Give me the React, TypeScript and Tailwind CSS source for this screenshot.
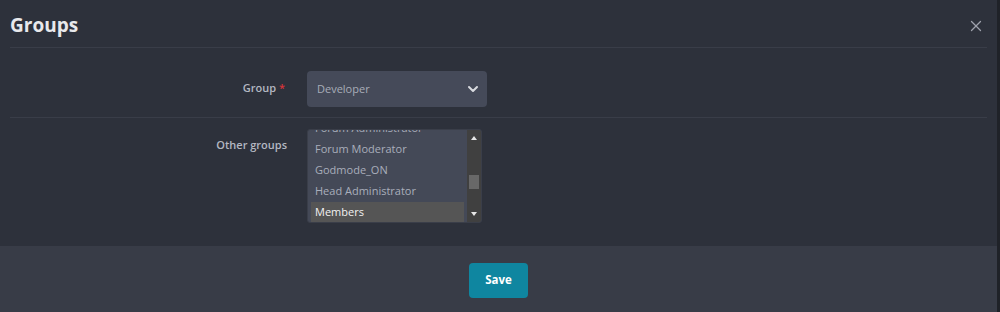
import React from "react";
import { X, ChevronDown } from "lucide-react";

const otherGroups = [
  "Forum Administrator",
  "Forum Moderator",
  "Godmode_ON",
  "Head Administrator",
  "Members",
];

export default function App() {
  return (
    <div
      className="flex h-[312px] w-[1000px] bg-[#2d313b]"
      style={{ fontFamily: '"Open Sans", "Noto Sans", sans-serif' }}
    >
      <div className="flex flex-1 flex-col">
        {/* Corps */}
        <div className="h-[246px] px-[10px]">
          <div className="flex h-[48px] items-center justify-between border-b border-[#393d48] pt-[4px]">
            <h2 className="text-[19px] font-bold text-[#e8e9eb]">Groups</h2>
            <button aria-label="Fermer" className="mr-[2px] text-[#9ea2ac]">
              <X className="h-[18px] w-[18px]" strokeWidth={1.7} />
            </button>
          </div>

          {/* Groupe principal */}
          <div className="flex h-[70px] items-start border-b border-[#393d48] pt-[23px]">
            <label className="w-[278px] pr-[3px] pt-[9px] text-right text-[11px] font-semibold text-[#b4b8c2]">
              Group <span className="text-[#d8343a]">*</span>
            </label>
            <div className="ml-[19px] flex h-[36px] w-[180px] items-center justify-between rounded-[4px] bg-[#454a59] pl-[10px] pr-[6px]">
              <span className="pt-[1px] text-[11px] text-[#a8adb8]">Developer</span>
              <ChevronDown className="h-[16px] w-[16px] text-[#d9dbe0]" strokeWidth={3} />
            </div>
          </div>

          {/* Autres groupes */}
          <div className="flex items-start pt-[11px]">
            <label className="w-[278px] pr-[1px] pt-[8px] text-right text-[11px] font-semibold text-[#b4b8c2]">
              Other groups
            </label>
            <div className="ml-[19px] flex h-[94px] w-[175px] overflow-hidden rounded-[3px] border border-[#3a3e49] bg-[#444957]">
              <div className="flex-1 overflow-hidden px-[3px] pt-[3px]">
                <div className="-mt-[15px] flex flex-col">
                  {otherGroups.map((g) => (
                    <div
                      key={g}
                      className={`flex h-[21px] items-center pl-[4px] text-[11px] ${
                        g === "Members" ? "bg-[#555555] text-[#f2f2f2]" : "text-[#a9aebb]"
                      }`}
                    >
                      {g}
                    </div>
                  ))}
                </div>
              </div>
              <div className="flex w-[14px] flex-col items-center bg-[#404040]">
                <div className="mt-[6px] h-0 w-0 border-x-[3px] border-b-[4px] border-x-transparent border-b-[#e6e6e6]" />
                <div className="mt-[35px] h-[14px] w-[10px] bg-[#686868]" />
                <div className="mt-auto mb-[6px] h-0 w-0 border-x-[3px] border-t-[4px] border-x-transparent border-t-[#e6e6e6]" />
              </div>
            </div>
          </div>
        </div>

        {/* Pied */}
        <div className="flex h-[66px] items-center justify-center bg-[#383c47] pt-[2px]">
          <button className="h-[35px] w-[59px] rounded-[4px] bg-[#0f86a0] text-[11.5px] font-bold text-white">
            Save
          </button>
        </div>
      </div>
      <div className="w-[3px] bg-[#1f2228]" />
    </div>
  );
}
